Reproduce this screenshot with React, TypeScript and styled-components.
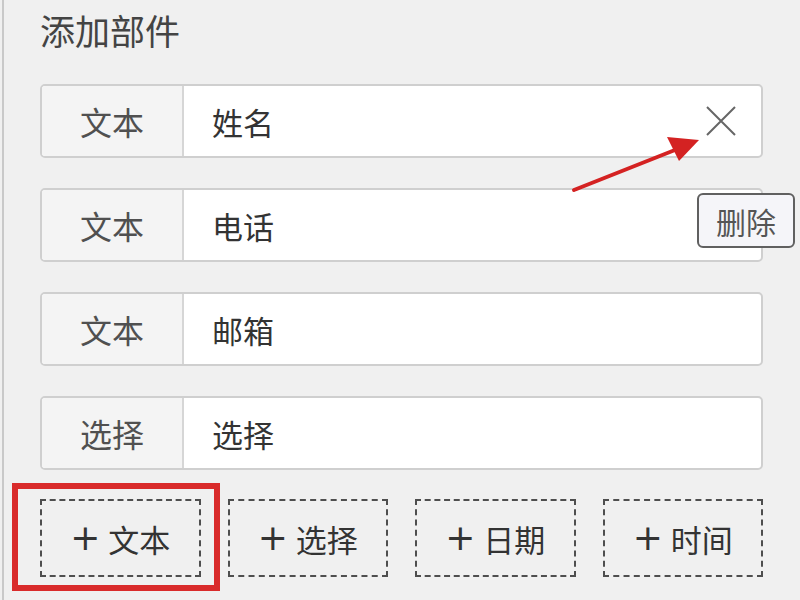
import React from "react";
import styled, { createGlobalStyle } from "styled-components";

const Global = createGlobalStyle`
  html, body { margin: 0; padding: 0; background: #f0f0f0; }
  body { font-family: "Noto Sans CJK SC", "Noto Sans", sans-serif; }
  * { box-sizing: border-box; }
`;

const Page = styled.div`
  position: relative;
  width: 800px;
  height: 600px;
  overflow: hidden;
  background: #f0f0f0;
`;

const Panel = styled.div`
  margin-left: 2px;
  height: 600px;
  border-left: 2px solid #c9c9c9;
  padding: 0 37px 0 36px;
  display: flex;
  flex-direction: column;
`;

const Title = styled.div`
  font-size: 35px;
  line-height: 40px;
  color: #444;
  padding-top: 10px;
  margin-bottom: 34px;
`;

const Rows = styled.div`
  display: flex;
  flex-direction: column;
  gap: 30px;
`;

const Row = styled.div`
  display: flex;
  height: 74px;
  border: 2px solid #cfcfcf;
  border-radius: 5px;
  background: #fff;
  overflow: hidden;
`;

const Label = styled.div`
  width: 142px;
  flex: none;
  display: flex;
  align-items: center;
  justify-content: center;
  background: #f4f4f4;
  border-right: 2px solid #d6d6d6;
  font-size: 32px;
  color: #505050;
`;

const Value = styled.div`
  flex: 1;
  display: flex;
  align-items: center;
  padding: 0 24px 0 28px;
  font-size: 31px;
  color: #333;
`;

const Close = styled.svg`
  margin-left: auto;
  width: 32px;
  height: 32px;
`;

const Buttons = styled.div`
  display: grid;
  grid-template-columns: repeat(4, 1fr);
  gap: 27px;
  margin-top: 29px;
`;

const AddButton = styled.div`
  position: relative;
  height: 78px;
  border: 2px dashed #4e4e4e;
  display: flex;
  align-items: center;
  justify-content: center;
  font-size: 31px;
  color: #333;
  gap: 8px;
`;

const Highlight = styled.div`
  position: absolute;
  left: -30px;
  top: -18px;
  right: -21px;
  bottom: -16px;
  border: 6px solid #d92b2b;
  pointer-events: none;
`;

const Plus = styled.span`
  font-size: 36px;
  line-height: 1;
  font-family: "DejaVu Sans", sans-serif;
  color: #333;
`;

const Tooltip = styled.div`
  position: absolute;
  left: 697px;
  top: 193px;
  width: 98px;
  height: 55px;
  border: 2px solid #606060;
  border-radius: 6px;
  background: #f5f5f9;
  display: flex;
  align-items: center;
  justify-content: center;
  font-size: 30px;
  color: #555;
`;

const Arrow = styled.svg`
  position: absolute;
  left: 0;
  top: 0;
  pointer-events: none;
`;

const rows = [
  { label: "文本", value: "姓名", close: true },
  { label: "文本", value: "电话" },
  { label: "文本", value: "邮箱" },
  { label: "选择", value: "选择" },
];

const adds = ["文本", "选择", "日期", "时间"];

export default function App() {
  return (
    <Page>
      <Global />
      <Panel>
        <Title>添加部件</Title>
        <Rows>
          {rows.map((r, i) => (
            <Row key={i}>
              <Label>{r.label}</Label>
              <Value>
                {r.value}
                {r.close && (
                  <Close viewBox="0 0 32 32">
                    <path d="M2 2 L30 30 M30 2 L2 30" stroke="#666" strokeWidth="2" fill="none" />
                  </Close>
                )}
              </Value>
            </Row>
          ))}
        </Rows>
        <Buttons>
          {adds.map((a, i) => (
            <AddButton key={a}>
              <Plus>+</Plus>
              {a}
              {i === 0 && <Highlight />}
            </AddButton>
          ))}
        </Buttons>
      </Panel>
      <Arrow width="800" height="600" viewBox="0 0 800 600">
        <line x1="574" y1="190" x2="680" y2="148" stroke="#d42222" strokeWidth="4" strokeLinecap="round" />
        <polygon points="699,140 667,137 679,161" fill="#d42222" />
      </Arrow>
      <Tooltip>删除</Tooltip>
    </Page>
  );
}
